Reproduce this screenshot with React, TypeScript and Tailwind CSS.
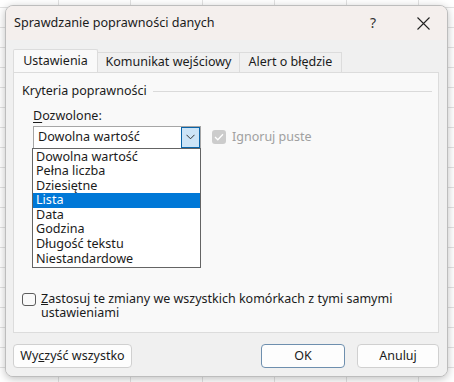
import React from "react";

const items = [
  "Dowolna wartość",
  "Pełna liczba",
  "Dziesiętne",
  "Lista",
  "Data",
  "Godzina",
  "Długość tekstu",
  "Niestandardowe",
];

export default function App() {
  return (
    <div
      className="w-[454px] h-[382px] overflow-hidden p-[5px] bg-white text-[#1b1b1b] [font-family:'Noto_Sans',sans-serif]"
      style={{
        backgroundImage:
          "linear-gradient(to right, #e2e2e2 1px, transparent 1px), linear-gradient(to bottom, #e2e2e2 1px, transparent 1px)",
        backgroundSize: "72px 20px",
        backgroundPosition: "58px 7px",
      }}
    >
      <div className="w-[443px] h-[372px] rounded-[8px] border border-[#bdbdbd] bg-[#f0f0f0] shadow-[0_2px_8px_rgba(0,0,0,0.25)] flex flex-col overflow-hidden">
        {/* title bar */}
        <div className="h-[34px] shrink-0 flex items-center bg-[#f4efed] pl-[8px]">
          <span className="text-[12.6px] leading-none">Sprawdzanie poprawności danych</span>
          <span className="ml-auto text-[14px] leading-none text-[#333] w-[10px] text-center mr-[39px]">?</span>
          <svg width="13" height="13" viewBox="0 0 13 13" className="mr-[17px]">
            <path d="M0.5 0.5L12.5 12.5M12.5 0.5L0.5 12.5" stroke="#222" strokeWidth="1.1" />
          </svg>
        </div>
        <div className="bg-[#f0f0f0] flex-1 flex flex-col pt-[10px] px-[7px]">
          {/* tabs */}
          <div className="flex items-end h-[22px] relative z-10">
            <div className="h-[23px] w-[85px] bg-[#f9f9f9] border border-[#dcdcdc] border-b-0 flex items-center justify-center text-[12.5px] rounded-t-[2px]">
              Ustawienia
            </div>
            <div className="h-[20px] w-[142px] bg-[#f0f0f0] border border-l-0 border-[#dcdcdc] border-b-0 flex items-center justify-center text-[12.5px]">
              Komunikat wejściowy
            </div>
            <div className="h-[20px] w-[102px] bg-[#f0f0f0] border border-l-0 border-[#dcdcdc] border-b-0 flex items-center justify-center text-[12.5px]">
              Alert o błędzie
            </div>
          </div>
          {/* panel */}
          <div className="h-[261px] w-[426px] bg-[#f9f9f9] border border-[#dcdcdc] flex flex-col">
            <div className="flex items-center h-[36px] pl-[8px] pr-[6px]">
              <span className="text-[12.5px] leading-none">Kryteria poprawności</span>
              <div className="flex-1 h-px bg-[#dadada] ml-[6px]" />
            </div>
            <div className="pl-[19px] text-[12.5px] leading-none mt-[1px]">
              <span className="underline underline-offset-2">D</span>ozwolone:
            </div>
            <div className="flex items-center mt-[3px] pl-[19px]">
              <div className="relative">
                <div className="w-[168px] h-[23px] bg-white border border-[#a6a6a6] flex items-center">
                  <span className="text-[12.6px] pl-[4px] flex-1 leading-none">Dowolna wartość</span>
                  <div className="w-[19px] h-[21px] bg-[#cce4f7] border border-[#0a64a8] flex items-center justify-center mr-0">
                    <svg width="9" height="6" viewBox="0 0 9 6">
                      <path d="M0.5 0.8L4.5 4.8L8.5 0.8" stroke="#333" strokeWidth="1" fill="none" />
                    </svg>
                  </div>
                </div>
                <div className="absolute left-[-1px] top-[22px] w-[169px] bg-white border border-[#646464] flex flex-col py-px">
                  {items.map((it) => (
                    <div
                      key={it}
                      className={
                        "h-[14.6px] flex items-center pl-[3px] text-[12.6px] leading-none " +
                        (it === "Lista" ? "bg-[#0078d7] text-white" : "")
                      }
                    >
                      {it}
                    </div>
                  ))}
                </div>
              </div>
              <div className="ml-[11px] w-[14px] h-[14px] rounded-[3px] bg-[#cccccc] flex items-center justify-center">
                <svg width="10" height="8" viewBox="0 0 10 8">
                  <path d="M1 4L3.8 6.8L9 1.2" stroke="#fff" strokeWidth="1.3" fill="none" />
                </svg>
              </div>
              <span className="ml-[6px] text-[12.5px] text-[#a0a0a0] leading-none">Ignoruj puste</span>
            </div>
            <div className="mt-auto mb-[12px] flex items-start pl-[8px]">
              <div className="w-[14px] h-[13px] mt-[1px] rounded-[3px] border border-[#5c5c5c] bg-[#f9f9f9] shrink-0" />
              <div className="ml-[5px] text-[12.5px] leading-[14px]">
                <span className="underline underline-offset-1">Z</span>astosuj te zmiany we wszystkich komórkach z tymi samymi
                <br />
                ustawieniami
              </div>
            </div>
          </div>
          {/* buttons */}
          <div className="flex items-center mt-[11px] h-[24px]">
            <button className="w-[119px] h-[24px] bg-[#fdfdfd] border border-[#d0d0d0] rounded-[4px] text-[12.5px] leading-none">
              Wy<span className="underline underline-offset-1">c</span>zyść wszystko
            </button>
            <button className="ml-auto w-[84px] h-[24px] bg-[#fdfdfd] border border-[#6e8fae] rounded-[4px] text-[12.5px] leading-none">
              OK
            </button>
            <button className="ml-[12px] mr-[1px] w-[82px] h-[24px] bg-[#fdfdfd] border border-[#d0d0d0] rounded-[4px] text-[12.5px] leading-none">
              Anuluj
            </button>
          </div>
        </div>
      </div>
    </div>
  );
}
